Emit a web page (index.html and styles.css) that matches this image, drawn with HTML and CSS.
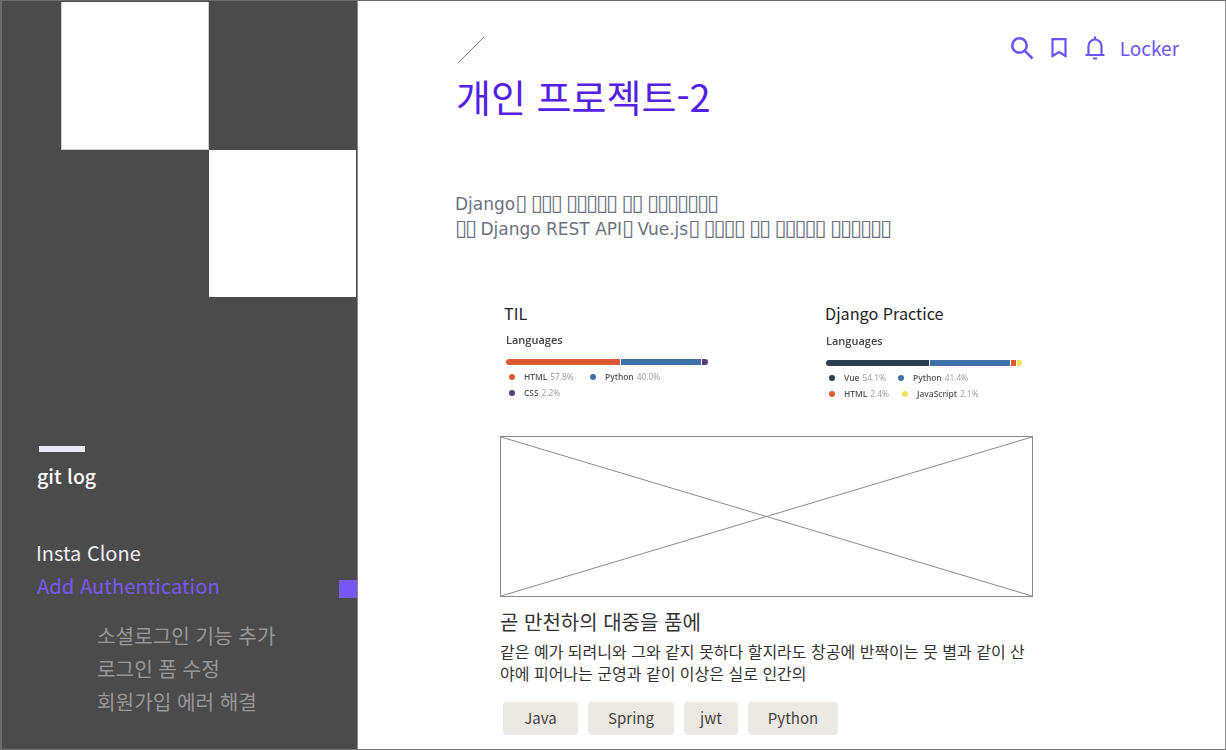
FILE: index.html
```html
<!DOCTYPE html>
<html lang="ko">
<head>
<meta charset="utf-8">
<title>개인 프로젝트-2</title>
<link rel="stylesheet" href="styles.css">
</head>
<body>
<div class="frame">
  <aside class="side">
    <div class="squares">
      <div class="sq sq-a"></div>
      <div class="sq sq-b"></div>
    </div>
    <div class="side-body">
      <div class="dash"></div>
      <div class="log">git log</div>
      <div class="project">Insta Clone</div>
      <div class="branch">Add Authentication<span class="marker"></span></div>
      <ul class="commits">
        <li>소셜로그인 기능 추가</li>
        <li>로그인 폼 수정</li>
        <li>회원가입 에러 해결</li>
      </ul>
    </div>
  </aside>
  <main class="main">
    <header class="top">
      <svg class="slash" width="28" height="28" viewBox="0 0 28 28"><path d="M1 27 27 1" stroke="#777" fill="none"/></svg>
      <nav class="tools">
        <svg class="ico ico-search" width="24" height="24" viewBox="0 0 24 24" fill="none" stroke="#6b55f6" stroke-width="2.6"><circle cx="9.500" cy="9.500" r="7.200"/><path d="M14.800 14.800 22.500 22.500"/></svg>
        <svg class="ico ico-mark" width="16" height="20" viewBox="0 0 16 20" fill="none" stroke="#6b55f6" stroke-width="2.200"><path d="M1.500 1.200h13v16.800L8 14l-6.500 4z"/></svg>
        <svg class="ico ico-bell" width="20" height="24" viewBox="0 0 20 24" fill="none" stroke="#6b55f6" stroke-width="2.200"><path d="M.5 19h19M3.500 19V10a6.500 6.500 0 0 1 13 0v9M10 .5v3M8 22.500h4"/></svg>
        <span class="locker">Locker</span>
      </nav>
    </header>
    <h1 class="title">개인 프로젝트-2</h1>
    <p class="intro">Django<span class="tofu">▯</span> <span class="tofu">▯▯▯</span> <span class="tofu">▯▯▯▯▯</span> <span class="tofu">▯▯</span> <span class="tofu">▯▯▯▯▯▯▯</span><br><span class="tofu">▯▯</span> Django REST API<span class="tofu">▯</span> Vue.js<span class="tofu">▯</span> <span class="tofu">▯▯▯▯</span> <span class="tofu">▯▯</span> <span class="tofu">▯▯▯▯▯</span> <span class="tofu">▯▯▯▯▯▯</span></p>
    <section class="repos">
      <div class="repo">
        <h2 class="repo-name">TIL</h2>
        <div class="stat">
          <div class="stat-title">Languages</div>
          <div class="bar bar-til"><i class="c-html w-1"></i><i class="c-py w-2"></i><i class="c-css w-3"></i></div>
          <div class="legend"><span class="lg lg-a"><b class="dot c-html"></b>HTML <em>57.8%</em></span><span class="lg"><b class="dot c-py"></b>Python <em>40.0%</em></span></div>
          <div class="legend"><span class="lg"><b class="dot c-css"></b>CSS <em>2.2%</em></span></div>
        </div>
      </div>
      <div class="repo">
        <h2 class="repo-name">Django Practice</h2>
        <div class="stat stat-b">
          <div class="stat-title">Languages</div>
          <div class="bar bar-dj"><i class="c-vue w-4"></i><i class="c-py w-5"></i><i class="c-html w-6"></i><i class="c-js w-7"></i></div>
          <div class="legend"><span class="lg lg-b"><b class="dot c-vue"></b>Vue <em>54.1%</em></span><span class="lg"><b class="dot c-py"></b>Python <em>41.4%</em></span></div>
          <div class="legend"><span class="lg lg-c"><b class="dot c-html"></b>HTML <em>2.4%</em></span><span class="lg"><b class="dot c-js"></b>JavaScript <em>2.1%</em></span></div>
        </div>
      </div>
    </section>
    <div class="shot">
      <svg class="cross" width="100%" height="100%" viewBox="0 0 531 159" preserveAspectRatio="none"><path d="M0 0 531 159M531 0 0 159" stroke="#8a8a8a" fill="none"/></svg>
    </div>
    <h3 class="post-title">곧 만천하의 대중을 품에</h3>
    <p class="post-text">같은 예가 되려니와 그와 같지 못하다 할지라도 창공에 반짝이는 뭇 별과 같이 산<br>야에 피어나는 군영과 같이 이상은 실로 인간의</p>
    <div class="tags">
      <span class="tag t-java">Java</span>
      <span class="tag t-spring">Spring</span>
      <span class="tag t-jwt">jwt</span>
      <span class="tag t-py">Python</span>
    </div>
  </main>
</div>
</body>
</html>
```
FILE: styles.css
```css
* { box-sizing: border-box; }
html, body { margin: 0; padding: 0; background: #fff; }
body { width: 1226px; height: 750px; overflow: hidden; font-family: "Noto Sans CJK KR", "Noto Sans", sans-serif; }
.frame { width: 1226px; height: 750px; display: flex; border-top: 1px solid #6b6b6b; border-left: 1px solid #6b6b6b; border-right: 1px solid #888; border-bottom: 1px solid #777; }
.side { width: 357px; flex: none; background: #4b4b4b; border-left: 1px solid #6b6b6b; border-right: 1px solid #888; display: flex; flex-direction: column; }
.squares { display: grid; grid-template-columns: 59px 148px 147px; grid-template-rows: 148px 147px; height: 295px; margin-top: 1px; }
.sq { background: #fff; }
.sq-a { grid-column: 2; grid-row: 1; border-right: 1px solid #ccc; border-bottom: 1px solid #ccc; border-left: 1px solid #ccc; }
.sq-b { grid-column: 3; grid-row: 2; }
.side-body { padding: 149px 0 0 34px; position: relative; flex: 1; }
.dash { width: 46px; height: 6px; background: #e9e6f6; margin-left: 3px; }
.log { font-size: 19.500px; line-height: 32px; font-weight: 500; color: #fff; margin: 8px 0 0 1px; }
.project { font-size: 20px; line-height: 30px; color: #eeecf8; margin-top: 46px; }
.branch { font-size: 20.200px; line-height: 30px; color: #7758f5; margin: 3px 0 0 1px; }
.marker { position: absolute; right: 0; top: 283px; width: 18px; height: 18px; background: #7758f5; }
.commits { list-style: none; margin: 18px 0 0 61px; padding: 0; font-size: 20.200px; line-height: 33px; color: #979797; }
.main { flex: 1; padding: 35px 46px 0 98px; }
.top { display: flex; justify-content: space-between; align-items: flex-start; height: 28px; }
.slash { margin-left: 1px; }
.tools { display: flex; align-items: center; color: #6b55f6; height: 24px; }
.ico-mark { margin-left: 17px; }
.ico-bell { margin-left: 18px; }
.locker { margin-left: 15px; font-size: 19px; line-height: 24px; margin-top: -1px; }
.title { font-size: 38px; line-height: 50px; font-weight: 400; color: #5420e4; margin: 7px 0 0 0; }
.intro { font-family: "DejaVu Sans", sans-serif; font-size: 17px; line-height: 25px; color: #6b7280; margin: 71px 0 0 -1px; }
.tofu { font-size: 22px; line-height: 0; letter-spacing: -2.100px; }
.repos { display: flex; margin: 59px 0 0 48px; }
.repo { width: 321px; }
.repo-name { font-size: 16.200px; line-height: 24px; font-weight: 400; color: #222; margin: 0; }
.stat { font-family: "Open Sans", sans-serif; filter: blur(0.45px); margin: 7px 0 0 2px; }
.stat-b { margin: 8px 0 0 1px; }
.stat-title { font-size: 11px; line-height: 16px; font-weight: 600; color: #444; }
.bar { display: flex; gap: 1px; height: 6px; margin-top: 11px; border-radius: 3px; overflow: hidden; width: 202px; }
.bar-dj { width: 196px; }
.bar i { display: block; height: 6px; }
.w-1 { width: 114px; } .w-2 { width: 80px; } .w-3 { width: 6px; }
.w-4 { width: 103px; } .w-5 { width: 80px; } .w-6 { width: 5px; } .w-7 { width: 5px; }
.c-html { background: #dd5a32; } .c-py { background: #3f72a8; } .c-css { background: #563d7c; } .c-vue { background: #2c3e50; } .c-js { background: #f1e05a; }
.legend { display: flex; font-size: 8.400px; line-height: 16px; font-weight: 600; color: #555; margin-left: 3px; }
.legend:nth-child(3) { margin-top: 4px; }
.lg { display: flex; align-items: center; }
.lg em { font-style: normal; font-weight: 400; color: #999; margin-left: 3px; }
.lg-a { width: 81px; }
.lg-b { width: 69px; }
.lg-c { width: 73px; }
.dot { width: 6px; height: 6px; border-radius: 50%; margin-right: 9px; }
.shot { width: 533px; height: 161px; border: 1px solid #8a8a8a; margin: 34px 0 0 44px; }
.cross { display: block; }
.post-title { font-size: 20px; line-height: 28px; font-weight: 400; color: #333; margin: 11px 0 0 44px; }
.post-text { font-size: 16px; line-height: 22px; color: #333; margin: 4px 0 0 44px; white-space: nowrap; }
.tags { display: flex; gap: 10px; margin: 18px 0 0 47px; }
.tag { height: 33px; background: #ece8e3; border-radius: 4px; font-size: 15px; line-height: 32px; color: #444; text-align: center; }
.t-java { width: 75px; } .t-spring { width: 86px; } .t-jwt { width: 54px; } .t-py { width: 90px; }
```
